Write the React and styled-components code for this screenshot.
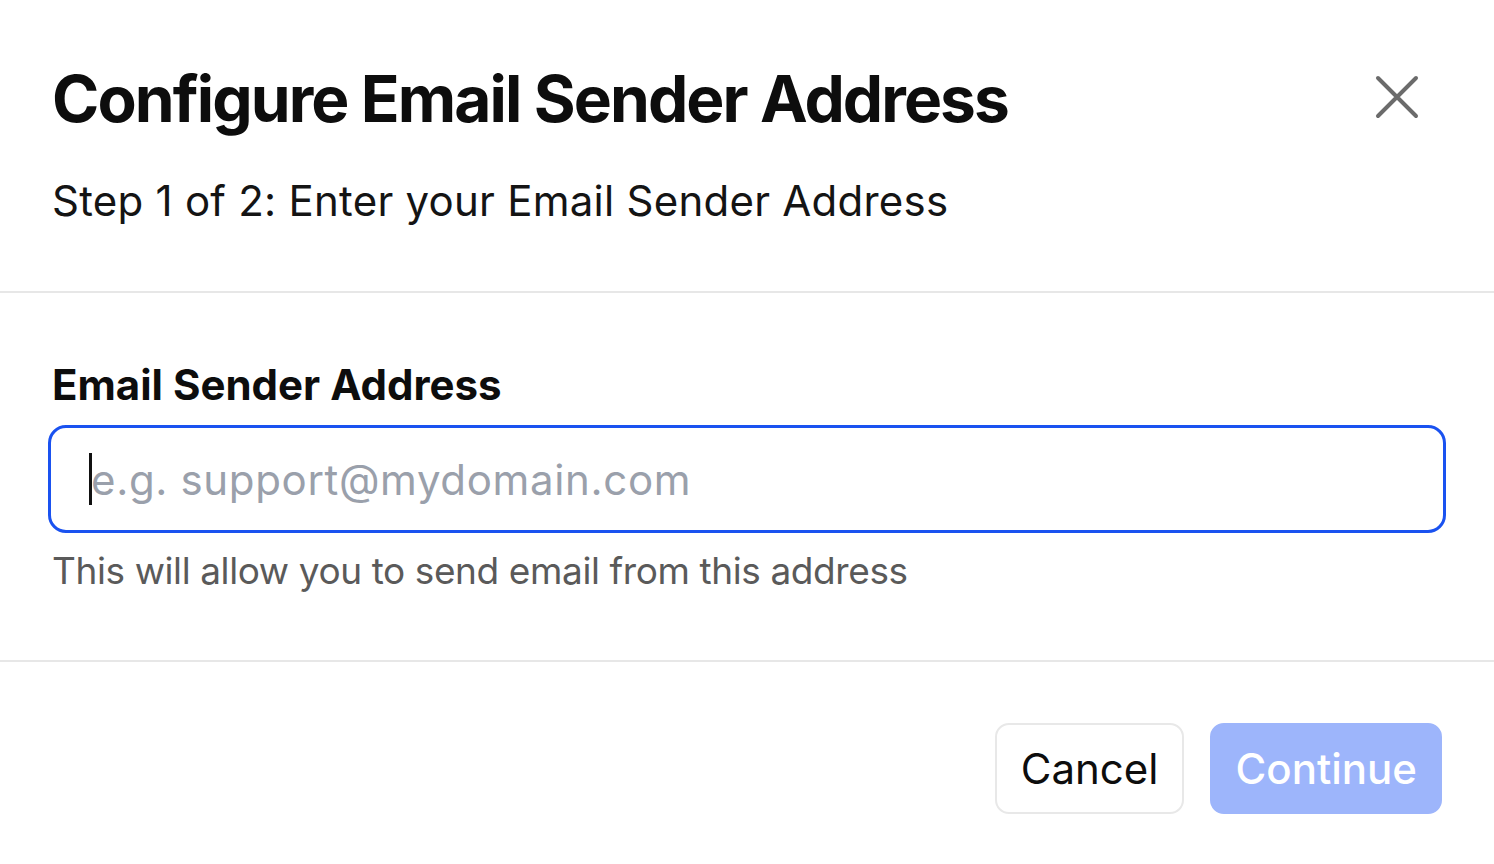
import React from 'react'
import styled, { createGlobalStyle } from 'styled-components'

const GlobalStyle = createGlobalStyle`
  html, body {
    margin: 0;
    padding: 0;
    background: #ffffff;
  }
  body {
    font-family: Inter, "Noto Sans", sans-serif;
    color: #111111;
  }
`

const Modal = styled.div`
  width: 1494px;
  height: 864px;
  background: #fff;
  display: flex;
  flex-direction: column;
`

const Header = styled.header`
  padding: 59px 52px 62px 52px;
  border-bottom: 2px solid #e7e7e7;
`

const TitleRow = styled.div`
  display: flex;
  align-items: center;
  justify-content: space-between;
`

const Title = styled.h1`
  margin: 0;
  font-size: 64px;
  line-height: 80px;
  font-weight: 700;
  letter-spacing: -1.9px;
  color: #0d0d0d;
`

const CloseButton = styled.button`
  width: 46px;
  height: 46px;
  margin: 0 22px 4px 0;
  padding: 0;
  border: 0;
  background: none;
  color: #6b6b6b;
  cursor: pointer;
  display: flex;
  align-items: center;
  justify-content: center;
`

const Subtitle = styled.p`
  margin: 34px 0 0;
  font-size: 42px;
  line-height: 56px;
  font-weight: 400;
  letter-spacing: 0.25px;
  color: #141414;
`

const Body = styled.section`
  padding: 64px 48px 65px 48px;
  border-bottom: 2px solid #e7e7e7;
`

const Label = styled.label`
  display: block;
  margin: 0 0 12px 4px;
  font-size: 42px;
  line-height: 56px;
  font-weight: 700;
  letter-spacing: 0;
  color: #0d0d0d;
`

const Field = styled.div`
  position: relative;
`

const Input = styled.input`
  box-sizing: border-box;
  width: 1398px;
  height: 108px;
  padding: 0 40px;
  border: 3px solid #1a52f0;
  border-radius: 18px;
  outline: none;
  font-family: Inter, "Noto Sans", sans-serif;
  font-size: 42px;
  letter-spacing: 0.65px;
  color: #111;
  background: #fff;

  &::placeholder {
    color: #9aa0ab;
    opacity: 1;
  }
`

const Caret = styled.span`
  position: absolute;
  left: 41px;
  top: 28px;
  width: 3px;
  height: 52px;
  background: #111;
`

const Help = styled.p`
  margin: 14px 0 0 4px;
  font-size: 37px;
  line-height: 48px;
  letter-spacing: -0.4px;
  color: #5a5a5a;
`

const Footer = styled.footer`
  display: flex;
  justify-content: flex-end;
  gap: 26px;
  padding: 61px 52px 0 52px;
`

const Button = styled.button`
  box-sizing: border-box;
  height: 91px;
  padding: 0 ${p => (p.$primary ? 23 : 24)}px;
  border-radius: 14px;
  font-family: Inter, "Noto Sans", sans-serif;
  font-size: 42px;
  font-weight: ${p => (p.$primary ? 500 : 400)};
  letter-spacing: 0;
  border: 2px solid ${p => (p.$primary ? '#9db5fb' : '#e8e8e8')};
  background: ${p => (p.$primary ? '#9db5fb' : '#ffffff')};
  color: ${p => (p.$primary ? '#ffffff' : '#0d0d0d')};
  cursor: ${p => (p.$primary ? 'not-allowed' : 'pointer')};
`

const CloseIcon = () => (
  <svg width="46" height="46" viewBox="0 0 46 46" fill="none">
    <path
      d="M4 4 L42 42 M42 4 L4 42"
      stroke="currentColor"
      strokeWidth="4"
      strokeLinecap="round"
    />
  </svg>
)

export default function App() {
  return (
    <>
      <GlobalStyle />
      <Modal>
        <Header>
          <TitleRow>
            <Title>Configure Email Sender Address</Title>
            <CloseButton aria-label="Close">
              <CloseIcon />
            </CloseButton>
          </TitleRow>
          <Subtitle>Step 1 of 2: Enter your Email Sender Address</Subtitle>
        </Header>
        <Body>
          <Label htmlFor="sender">Email Sender Address</Label>
          <Field>
            <Input id="sender" type="email" placeholder="e.g. support@mydomain.com" />
            <Caret />
          </Field>
          <Help>This will allow you to send email from this address</Help>
        </Body>
        <Footer>
          <Button>Cancel</Button>
          <Button $primary disabled>Continue</Button>
        </Footer>
      </Modal>
    </>
  )
}
